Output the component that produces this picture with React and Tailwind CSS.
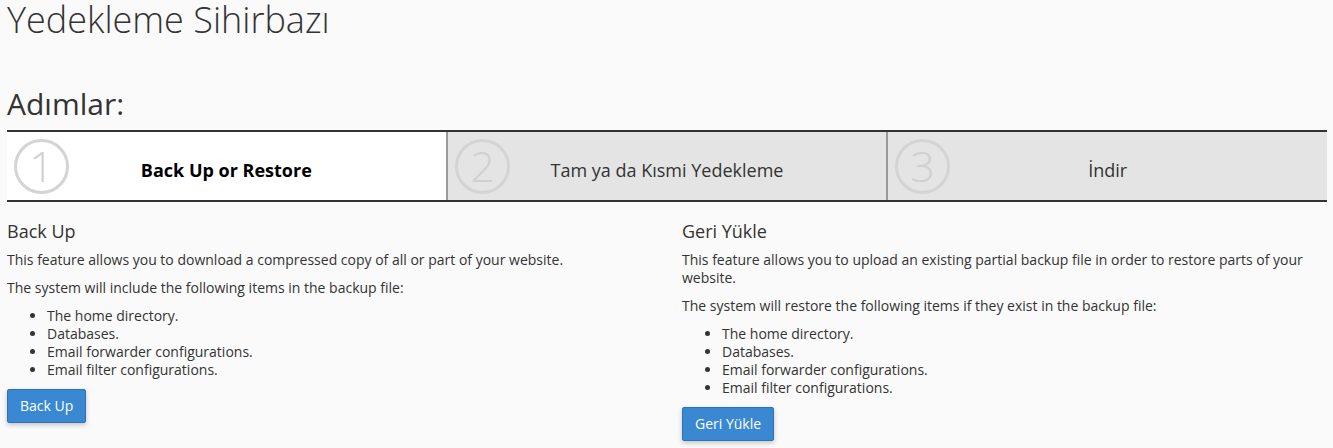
import React from "react";

const font = { fontFamily: '"Open Sans", "Noto Sans", sans-serif' };

function Circle({ n }) {
  return (
    <svg width="57" height="57" viewBox="0 0 57 57" className="absolute left-[6px] top-[6px]">
      <circle cx="28.5" cy="28.5" r="26" fill="none" stroke="#d4d4d4" strokeWidth="3" />
      <text
        x="28.5"
        y="44"
        textAnchor="middle"
        fontSize="43"
        fontWeight="300"
        fill="#d0d0d0"
        fontFamily='"Open Sans", sans-serif'
      >
        {n}
      </text>
    </svg>
  );
}

function Step({ n, label, active, first }) {
  return (
    <div
      className={
        "relative flex-1 h-[68px] flex items-center justify-center pt-[10px] " +
        (active ? "bg-white " : "bg-[#e4e4e4] ") +
        (first ? "" : "border-l-2 border-[#999999]")
      }
    >
      <Circle n={n} />
      <span
        className={
          active ? "text-[18px] font-bold text-black" : "text-[18px] text-[#333333]"
        }
      >
        {label}
      </span>
    </div>
  );
}

function Column({ title, intro, lead, button }) {
  return (
    <div className="min-w-0">
      <h3 className="text-[18px] leading-[1.1] font-normal mt-[20px] mb-[10px] text-[#333333]">{title}</h3>
      <p className="mb-[10px] leading-[18px]">{intro}</p>
      <p className="mb-[10px] leading-[18px]">{lead}</p>
      <ul className="list-disc pl-[40px] mb-[10px] leading-[18px]">
        <li>The home directory.</li>
        <li>Databases.</li>
        <li>Email forwarder configurations.</li>
        <li>Email filter configurations.</li>
      </ul>
      <button className="bg-[#3a88d2] border border-[#2f73b6] text-white text-[14px] leading-[20px] px-[12px] py-[6px] rounded-[2px] shadow-[0_2px_5px_rgba(0,0,0,0.22)]">
        {button}
      </button>
    </div>
  );
}

export default function App() {
  return (
    <div className="min-h-[448px] bg-[#fafafa] text-[#333333] text-[14px] px-[7px] pr-[6px]" style={font}>
      <h1 className="text-[36px] leading-[1.1] font-light m-0 text-[#333333]">Yedekleme Sihirbazı</h1>
      <h2 className="text-[30px] leading-[1.1] font-normal mt-[47px] mb-[10px] text-[#333333]">Adımlar:</h2>
      <div className="flex border-y-2 border-[#333333]">
        <Step n="1" label="Back Up or Restore" active first />
        <Step n="2" label="Tam ya da Kısmi Yedekleme" />
        <Step n="3" label="İndir" />
      </div>
      <div className="grid grid-cols-2 gap-[30px]">
        <Column
          title="Back Up"
          intro="This feature allows you to download a compressed copy of all or part of your website."
          lead="The system will include the following items in the backup file:"
          button="Back Up"
        />
        <Column
          title="Geri Yükle"
          intro="This feature allows you to upload an existing partial backup file in order to restore parts of your website."
          lead="The system will restore the following items if they exist in the backup file:"
          button="Geri Yükle"
        />
      </div>
    </div>
  );
}
